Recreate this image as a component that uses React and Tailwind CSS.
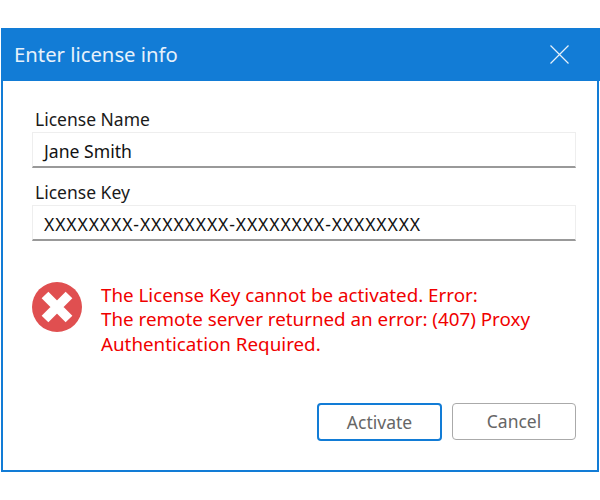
import React from 'react';

const Field = ({ label, value, spacing = '', valueClass = '' }) => (
  <div className={`flex flex-col ${spacing}`}>
    <label className="h-[25px] pl-[3px] text-[17.5px] leading-[25px] text-[#1a1a1a]">{label}</label>
    <div className={`h-[36px] border-t border-x border-[#eeeeee] border-b-2 border-b-[#999999] bg-white pl-[11px] text-[17.6px] leading-[36px] text-[#111111] whitespace-nowrap ${valueClass}`}>
      {value}
    </div>
  </div>
);

const ErrorIcon = () => (
  <svg width="50" height="50" viewBox="0 0 50 50" className="shrink-0">
    <circle cx="25" cy="25" r="25" fill="#e04f50" />
    <path d="M13 13 L37 37 M37 13 L13 37" stroke="#fff" strokeWidth="9.5" />
  </svg>
);

export default function App() {
  return (
    <div className="w-[600px] h-[500px] bg-white pt-[28px] pl-px font-['Noto_Sans','Open_Sans',sans-serif]">
      <div className="w-[598px] h-[444px] border-2 border-t-0 border-[#127cd6] flex flex-col">
        <div className="h-[53px] -ml-[2px] -mr-[3px] bg-[#127cd6] flex items-center justify-between pl-[13px] pr-[31px] shrink-0">
          <span className="text-[20.3px] text-[#e6f1fb]">Enter license info</span>
          <svg width="19" height="19" viewBox="0 0 19 19">
            <path d="M0.5 0.5 L18.5 18.5 M18.5 0.5 L0.5 18.5" stroke="#e6f1fb" strokeWidth="1.2" />
          </svg>
        </div>
        <div className="flex-1 flex flex-col pt-[26px] pl-[29px] pr-[21px] pb-[29px]">
          <Field label="License Name" value="Jane Smith" />
          <Field label="License Key" value="XXXXXXXX-XXXXXXXX-XXXXXXXX-XXXXXXXX" spacing="mt-[12px]" valueClass="tracking-[0.86px]" />
          <div className="flex items-start mt-[41px]">
            <ErrorIcon />
            <p className="ml-[19px] mt-[1px] text-[18.8px] leading-[24.3px] text-[#f00000] whitespace-nowrap">
              The License Key cannot be activated. Error:<br />
              The remote server returned an error: (407) Proxy<br />
              Authentication Required.
            </p>
          </div>
          <div className="mt-auto flex justify-end items-start gap-[10px]">
            <button type="button" className="w-[125px] h-[38px] rounded-[4px] border-2 border-[#127cd6] text-[17.5px] text-[#666666]">Activate</button>
            <button type="button" className="w-[124px] h-[37px] rounded-[4px] border border-[#aaaaaa] text-[17.5px] text-[#666666]">Cancel</button>
          </div>
        </div>
      </div>
    </div>
  );
}
